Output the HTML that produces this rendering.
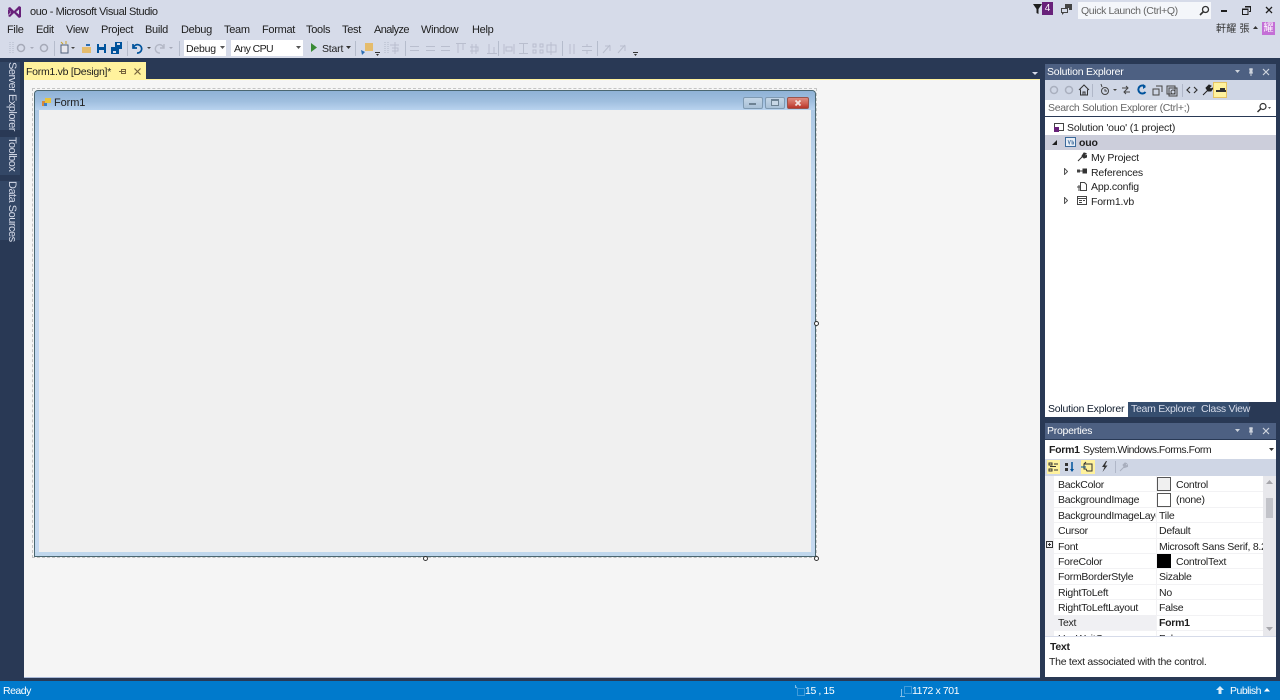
<!DOCTYPE html>
<html><head><meta charset="utf-8"><style>
html,body{margin:0;padding:0}
body{width:1280px;height:700px;overflow:hidden;position:relative;background:#d6dbe9;font-family:"Liberation Sans","Noto Sans CJK TC",sans-serif;font-size:11px;color:#1e1e1e}
div,span,svg{position:absolute}
.t{white-space:nowrap;line-height:14px;letter-spacing:-.27px;transform:translateY(1px)}
.m{top:22px;font-size:11px;color:#1e1e1e;line-height:15px;white-space:nowrap;letter-spacing:-.3px;transform:translateY(1px)}
.w{color:#fff}
.sep{width:1px;background:#b5bccc}
.row{left:1058px;font-size:10.5px;white-space:nowrap;line-height:14px;color:#1e1e1e;letter-spacing:-.27px;transform:translateY(1px)}
.val{left:1159px;font-size:10.5px;white-space:nowrap;line-height:14px;color:#1e1e1e;letter-spacing:-.27px;transform:translateY(1px)}
.line{left:1054px;width:209px;height:1px;background:#f2f2f4}
.tree{font-size:10.5px;white-space:nowrap;line-height:14px;color:#1e1e1e;letter-spacing:-.17px;transform:translateY(1px)}
.v{left:5px;writing-mode:vertical-rl;color:#d6dbe9;font-size:11px;line-height:14px;white-space:nowrap;letter-spacing:-.5px}
</style></head><body>

<svg style="left:7px;top:5px" width="15" height="14" viewBox="0 0 15 14"><path d="M1 4l3 3-3 3zM1 3l2-1 4 4 5-5 2 1v10l-2 1-5-5-4 4-2-1 3-3zM9 7l3 2.500V4.500z" fill="#68217a" fill-rule="evenodd"/></svg>
<div class="t" style="left:30px;top:4px;font-size:11px;letter-spacing:-.42px">ouo - Microsoft Visual Studio</div>

<div class="m" style="left:7px">File</div>
<div class="m" style="left:36px">Edit</div>
<div class="m" style="left:66px">View</div>
<div class="m" style="left:101px">Project</div>
<div class="m" style="left:145px">Build</div>
<div class="m" style="left:181px">Debug</div>
<div class="m" style="left:224px">Team</div>
<div class="m" style="left:262px">Format</div>
<div class="m" style="left:306px">Tools</div>
<div class="m" style="left:342px">Test</div>
<div class="m" style="left:374px;letter-spacing:-.6px">Analyze</div>
<div class="m" style="left:421px">Window</div>
<div class="m" style="left:472px">Help</div>

<!-- toolbar -->
<svg style="left:8px;top:40px" width="8" height="16"><path d="M2 2v12M5 2v12" stroke="#b3b9c9" stroke-dasharray="1 1"/></svg>
<svg style="left:16px;top:42px" width="36" height="12"><circle cx="5" cy="6" r="3.500" fill="none" stroke="#a6aab8" stroke-width="1.500"/><circle cx="28" cy="6" r="3.500" fill="none" stroke="#a6aab8" stroke-width="1.500"/><path d="M14 5h4l-2 2z" fill="#a6aab8"/></svg>
<div class="sep" style="left:54px;top:41px;height:15px"></div>
<svg style="left:58px;top:41px" width="66" height="14"><rect x="3" y="4" width="7" height="8" fill="#e8e8ee" stroke="#50607a"/><path d="M3 1l2 2M8 0v3" stroke="#c9a227"/><path d="M13 6h4l-2 2z" fill="#444"/><path d="M24 6h9v6h-9z" fill="#e5bc6c"/><path d="M28 3h4v2h-4z" fill="#2a6db3"/><path d="M39 3h9v9h-9z" fill="#00539c"/><path d="M41 3h5v3h-5zM41 9h5v3h-5z" fill="#d6dbe9"/><path d="M53 6h8v7h-8z" fill="#00539c"/><path d="M57 1h7v7h-7z" fill="#00539c"/><path d="M59 2h3v2h-3zM55 10h3v2h-3z" fill="#d6dbe9"/></svg>
<div class="sep" style="left:127px;top:41px;height:15px"></div>
<svg style="left:130px;top:41px" width="46" height="14"><path d="M3 3v4h4M3.500 6.500A4.200 4.200 0 1 1 7 12" fill="none" stroke="#00539c" stroke-width="1.700"/><path d="M17 6h4l-2 2z" fill="#444"/><path d="M34 3v4h-4M33.500 6.500A4.200 4.200 0 1 0 30 12" fill="none" stroke="#b3b8c6" stroke-width="1.400"/><path d="M39 6h4l-2 2z" fill="#a6aab8"/></svg>
<div class="sep" style="left:179px;top:41px;height:15px"></div>

<div style="left:184px;top:40px;width:42px;height:16px;background:#fff"></div>
<div class="t" style="left:186px;top:41px;font-size:10.5px;letter-spacing:-.2px">Debug</div>
<svg style="left:220px;top:46px" width="6" height="4"><path d="M0 0h5l-2.500 3z" fill="#555"/></svg>
<div style="left:231px;top:40px;width:72px;height:16px;background:#fff"></div>
<div class="t" style="left:234px;top:41px;font-size:10.5px;letter-spacing:-.6px">Any CPU</div>
<svg style="left:296px;top:46px" width="6" height="4"><path d="M0 0h5l-2.500 3z" fill="#555"/></svg>

<svg style="left:310px;top:42px" width="8" height="11"><path d="M1 1l6 4.500-6 4.500z" fill="#388a34"/></svg>
<div class="t" style="left:322px;top:41px;font-size:10.5px;letter-spacing:-.2px">Start</div>
<svg style="left:346px;top:46px" width="6" height="4"><path d="M0 0h5l-2.500 3z" fill="#333"/></svg>
<div class="sep" style="left:355px;top:41px;height:15px"></div>
<svg style="left:359px;top:41px" width="22" height="16"><path d="M6 2h8v8H6z" fill="#e5bc6c"/><path d="M2 9l4 2-3 3z" fill="#2a6db3"/><path d="M16 11h5v1h-5z" fill="#333"/><path d="M17 13h3l-1.500 2z" fill="#333"/></svg>
<svg style="left:383px;top:40px" width="8" height="16"><path d="M2 2v12M5 2v12" stroke="#b3b9c9" stroke-dasharray="1 1"/></svg>
<svg style="left:389px;top:41px" width="250" height="16">
<g fill="none" stroke="#b9bece">
<path d="M1 4h9M6 1v12M3 7h6v3H3"/>
<path d="M21 5.500h9M21 9.500h9M37 5.500h9M37 9.500h9M52 5.500h9M52 9.500h9"/>
<path d="M67 2.500h10M69 3v9M74 3v6M83 3v10M87 3v10M81 6h8v4h-8M98 12.500h10M100 3v9M105 6v6"/>
<path d="M115 3v10M125 3v10M117 6h6v4h-6zM130 2.500h9M130 12.500h9M134.500 3v9M144 3h3v3h-3zM151 3h3v3h-3zM144 9h3v3h-3zM151 9h3v3h-3zM158 4h9v7h-9zM162 1v13"/>
<path d="M181 3v10M185 3v10M193 5.500h10M193 9.500h10M198 3v2M198 10v3"/>
<path d="M214 12l7-8M216 5h5v5M229 12l7-8M231 5h5v5"/>
</g>
<path d="M244 11h5v1h-5zM245 13h3l-1.500 2z" fill="#333"/>
</svg>
<div class="sep" style="left:405px;top:41px;height:15px"></div>
<div class="sep" style="left:498px;top:41px;height:15px"></div>
<div class="sep" style="left:562px;top:41px;height:15px"></div>
<div class="sep" style="left:597px;top:41px;height:15px"></div>

<!-- top right -->
<svg style="left:1033px;top:4px" width="9" height="10"><path d="M0 0h9L5.500 5v5L3.500 9V5z" fill="#1e1e1e"/></svg>
<div style="left:1042px;top:2px;width:11px;height:13px;background:#68217a;color:#fff;text-align:center;line-height:13px;font-size:10px">4</div>
<svg style="left:1061px;top:4px" width="11" height="11"><path d="M4 0h7v6H8v-2H4z" fill="#444"/><path d="M0 4h7v5H3l-2 2V9H0z" fill="#444"/><path d="M1 5h5v3H1z" fill="#d6dbe9"/></svg>
<div style="left:1078px;top:2px;width:133px;height:17px;background:#f4f6fa"></div>
<div class="t" style="left:1081px;top:3px;color:#666;font-size:10.5px;letter-spacing:-.38px">Quick Launch (Ctrl+Q)</div>
<svg style="left:1199px;top:5px" width="11" height="11"><circle cx="6.500" cy="4.500" r="3" fill="none" stroke="#333" stroke-width="1.300"/><path d="M4.500 6.500L1 10" stroke="#333" stroke-width="1.600"/></svg>
<div style="left:1221px;top:10px;width:6px;height:2px;background:#1e1e1e"></div>
<svg style="left:1242px;top:6px" width="9" height="9"><path d="M3 .5h5.500v5H7M.5 3h5.500v5.500H.5z" fill="none" stroke="#1e1e1e"/><path d="M3 1h5M1 3.500h5" stroke="#1e1e1e"/></svg>
<svg style="left:1265px;top:6px" width="8" height="8"><path d="M1 1l6 6M7 1L1 7" stroke="#1e1e1e" stroke-width="1.300"/></svg>
<div class="t" style="left:1216px;top:22px;font-size:10px;color:#333;letter-spacing:.3px">軒耀 張</div>
<svg style="left:1253px;top:26px" width="5" height="3"><path d="M0 3h5L2.500 0z" fill="#333"/></svg>
<div style="left:1262px;top:22px;width:13px;height:13px;background:#c46fd6;color:#fff;font-size:10px;line-height:13px;text-align:center;overflow:hidden">耀</div>

<!-- dark band -->
<div style="left:0;top:58px;width:1280px;height:623px;background:#293955"></div>
<!-- left strip -->
<div style="left:0;top:62px;width:20px;height:68px;background:#334766"></div>
<div style="left:0;top:137px;width:20px;height:38px;background:#334766"></div>
<div style="left:0;top:181px;width:20px;height:59px;background:#334766"></div>
<div class="v" style="top:62px">Server Explorer</div>
<div class="v" style="top:137px">Toolbox</div>
<div class="v" style="top:181px">Data Sources</div>

<!-- document tab -->
<div style="left:24px;top:62px;width:122px;height:18px;background:#fff29d"></div>
<div class="t" style="left:26px;top:64px;font-size:10.5px">Form1.vb [Design]*</div>
<svg style="left:119px;top:68px" width="7" height="7"><path d="M0 3.500h2M2.500 1v5M2.500 1.500h4v4h-4M2.500 3.500h4" fill="none" stroke="#75633d"/></svg>
<svg style="left:134px;top:68px" width="7" height="7"><path d="M.5.500l6 6M6.500.500l-6 6" stroke="#75633d" stroke-width="1.200"/></svg>
<svg style="left:1032px;top:72px" width="6" height="4"><path d="M0 0h6L3 3z" fill="#d6dbe9"/></svg>

<!-- doc area -->
<div style="left:24px;top:79px;width:1016px;height:1px;background:#fff29d"></div>
<div style="left:24px;top:80px;width:1016px;height:597px;background:#f5f5f5"></div>
<div style="left:24px;top:677px;width:1016px;height:1px;background:#a9b8d6"></div>

<!-- form -->
<div style="left:33px;top:89px;width:783px;height:468px;outline:1px dashed #c4c4c4"></div>
<div style="left:34px;top:90px;width:782px;height:467px;border-radius:4px 4px 0 0;background:linear-gradient(#a4c2e0,#c3d8ef 18%,#c5d9f0);box-shadow:inset 0 0 0 1px #4a6670"></div>
<div style="left:35px;top:91px;width:780px;height:19px;background:linear-gradient(#8fb2d6,#a0bfdf 55%,#b9d3ef);border-radius:3px 3px 0 0"></div>
<div style="left:39px;top:110px;width:772px;height:442px;background:#f0f0f0"></div>
<div style="left:35px;top:552px;width:780px;height:4px;background:#c0d7ec"></div>
<svg style="left:42px;top:98px" width="9" height="9"><path d="M0 3h4v5H0z" fill="#d5883a"/><path d="M3 0h6v5H3z" fill="#e8c43e"/><path d="M2 5h3v3H2z" fill="#3c7fc7"/></svg>
<div class="t" style="left:54px;top:95px;font-size:11px;color:#222;letter-spacing:-.1px">Form1</div>
<div style="left:743px;top:97px;width:18px;height:10px;border:1px solid #7f9ab2;border-radius:2px;background:linear-gradient(#c4d6e7,#a9c1d7)"></div>
<div style="left:749px;top:103px;width:7px;height:2px;background:#6d8293"></div>
<div style="left:765px;top:97px;width:18px;height:10px;border:1px solid #7f9ab2;border-radius:2px;background:linear-gradient(#c4d6e7,#a9c1d7)"></div>
<div style="left:771px;top:99px;width:6px;height:4px;border:1px solid #6d8293;border-top-width:2px;background:#c7d7e6"></div>
<div style="left:787px;top:97px;width:20px;height:10px;border:1px solid #9a544c;border-radius:2px;background:linear-gradient(#dd8c80,#cf5f52 55%,#b8342a)"></div>
<svg style="left:794px;top:99px" width="8" height="8"><path d="M1.500 1.500l5 5M6.500 1.500l-5 5" stroke="#f3e3e0" stroke-width="1.800"/></svg>
<div style="left:814px;top:321px;width:3px;height:3px;background:#fff;border:1px solid #333;border-radius:50%"></div>
<div style="left:423px;top:556px;width:3px;height:3px;background:#fff;border:1px solid #333;border-radius:50%"></div>
<div style="left:814px;top:556px;width:3px;height:3px;background:#fff;border:1px solid #333;border-radius:50%"></div>

<!-- solution explorer -->
<div style="left:1045px;top:64px;width:231px;height:16px;background:#4d6082"></div>
<div class="t" style="left:1047px;top:64px;color:#fff;font-size:10.5px;letter-spacing:-.2px">Solution Explorer</div>
<svg style="left:1235px;top:68px" width="36" height="9"><path d="M0 2h5L2.500 5z" fill="#ced4dd"/><path d="M16 0v5M14 1h4M15 1v3h2v-3M14 5h4M16 5v3" fill="none" stroke="#ced4dd"/><path d="M28 1l6 6M34 1l-6 6" stroke="#ced4dd" stroke-width="1.200"/></svg>
<div style="left:1045px;top:80px;width:231px;height:20px;background:#cfd6e5"></div>
<svg style="left:1049px;top:83px" width="186" height="14">
<circle cx="5" cy="7" r="3.500" fill="none" stroke="#a9afbe" stroke-width="1.500"/><circle cx="20" cy="7" r="3.500" fill="none" stroke="#a9afbe" stroke-width="1.500"/>
<path d="M30 7l5-5 5 5M31.500 6.500V12h7V6.500M34 12V9h2v3" fill="none" stroke="#333"/>
<path d="M43.500 1v13" stroke="#b0b7c8"/>
<circle cx="56" cy="8" r="3.500" fill="none" stroke="#444"/><path d="M52 1l1 3M56 6v2h2" fill="none" stroke="#444"/><path d="M64 6h4l-2 2z" fill="#444"/>
<path d="M73 5h6M77 3l2 2-2 2M81 9h-6M77 7l-2 2 2 2" fill="none" stroke="#444"/>
<path d="M96 3.500A4 4 0 1 0 96.500 9" fill="none" stroke="#00539c" stroke-width="2"/><path d="M94 1l3 3-3 2z" fill="#00539c"/>
<path d="M104 6h6v6h-6zM107 3h6v6" fill="none" stroke="#444"/>
<path d="M118 3h8v8h-8zM120 5h8v8h-8z" fill="none" stroke="#444"/><circle cx="124" cy="9" r="2" fill="none" stroke="#444"/>
<path d="M133.500 1v13" stroke="#b0b7c8"/>
<path d="M141 4l-3 3 3 3M145 4l3 3-3 3" fill="none" stroke="#333" stroke-width="1.200"/>
<path d="M154 12l5-5M157 5l3-3 2 1-2 2 2 1 2-1-2 3-3 0z" fill="#222" stroke="#222"/>
</svg>
<div style="left:1213px;top:82px;width:14px;height:16px;background:#fff29d;border:1px solid #e5c365;box-sizing:border-box"></div>
<div style="left:1216px;top:90px;width:10px;height:2px;background:#333"></div>
<div style="left:1220px;top:88px;width:5px;height:2px;background:#333"></div>
<div style="left:1045px;top:100px;width:231px;height:16px;background:#fff"></div>
<div class="t" style="left:1048px;top:100px;color:#666;font-size:10.5px;letter-spacing:-.3px">Search Solution Explorer (Ctrl+;)</div>
<svg style="left:1256px;top:102px" width="16" height="11"><circle cx="7" cy="4.500" r="3" fill="none" stroke="#333" stroke-width="1.200"/><path d="M5 6.500L1.500 10" stroke="#333" stroke-width="1.500"/><path d="M12 5h3l-1.500 2z" fill="#555"/></svg>
<div style="left:1045px;top:117px;width:231px;height:285px;background:#fff"></div>
<div style="left:1045px;top:135px;width:231px;height:15px;background:#cccedb"></div>
<svg style="left:1053px;top:122px" width="11" height="11"><path d="M1.500 1.500h9v7h-9z" fill="none" stroke="#444"/><path d="M1 5h5v5H1z" fill="#68217a"/></svg>
<div class="tree" style="left:1067px;top:120px">Solution 'ouo' (1 project)</div>
<svg style="left:1052px;top:140px" width="5" height="5"><path d="M5 0v5H0z" fill="#1e1e1e"/></svg>
<svg style="left:1065px;top:137px" width="11" height="10"><rect x=".5" y=".5" width="10" height="9" fill="#e8eef6" stroke="#3b6a9b"/><path d="M3 3l1.200 4L5.500 3M7 3v4h1.500V5H7" fill="none" stroke="#3b6a9b" stroke-width=".7"/></svg>
<div class="tree" style="left:1079px;top:135px;font-weight:bold">ouo</div>
<svg style="left:1077px;top:152px" width="10" height="10"><path d="M1 9l4.500-4.500M5 4l2-3 2 .500-1.500 1.500 1.500 1 1-1 0 2-3 1z" fill="#333" stroke="#333"/></svg>
<div class="tree" style="left:1091px;top:150px">My Project</div>
<svg style="left:1064px;top:168px" width="4" height="7"><path d="M.5.500l3 3-3 3z" fill="none" stroke="#555"/></svg>
<svg style="left:1077px;top:168px" width="10" height="6"><rect width="3" height="3" y="1.500" fill="#444"/><rect x="5.500" y="0.500" width="4.500" height="5" fill="#333"/><path d="M3 3h3" stroke="#444"/></svg>
<div class="tree" style="left:1091px;top:165px">References</div>
<svg style="left:1077px;top:181px" width="10" height="11"><path d="M3.500 1.500h4l2 2v6h-6z" fill="none" stroke="#444"/><path d="M0 6h3M2 4v6" stroke="#444"/></svg>
<div class="tree" style="left:1091px;top:179px">App.config</div>
<svg style="left:1064px;top:197px" width="4" height="7"><path d="M.5.500l3 3-3 3z" fill="none" stroke="#555"/></svg>
<svg style="left:1077px;top:196px" width="10" height="9"><path d="M.5.500h9v8h-9zM1 2.500h8M2 4.500h3M2 6.500h3M6 4.500h2" fill="none" stroke="#444"/></svg>
<div class="tree" style="left:1091px;top:194px">Form1.vb</div>

<!-- tabs -->
<div style="left:1045px;top:402px;width:83px;height:15px;background:#fff"></div>
<div class="t" style="left:1048px;top:401px;font-size:10.5px;color:#0e1a2b;letter-spacing:-.22px">Solution Explorer</div>
<div style="left:1128px;top:402px;width:121px;height:15px;background:#364e6f"></div>
<div class="t" style="left:1131px;top:401px;font-size:10.5px;color:#d6dbe9">Team Explorer</div>
<div class="t" style="left:1201px;top:401px;font-size:10.5px;color:#d6dbe9">Class View</div>

<!-- properties -->
<div style="left:1045px;top:423px;width:231px;height:16px;background:#4d6082"></div>
<div class="t" style="left:1047px;top:423px;color:#fff;font-size:10.5px">Properties</div>
<svg style="left:1235px;top:427px" width="36" height="9"><path d="M0 2h5L2.500 5z" fill="#ced4dd"/><path d="M16 0v5M14 1h4M15 1v3h2v-3M14 5h4M16 5v3" fill="none" stroke="#ced4dd"/><path d="M28 1l6 6M34 1l-6 6" stroke="#ced4dd" stroke-width="1.200"/></svg>
<div style="left:1045px;top:440px;width:231px;height:19px;background:#fff"></div>
<div class="t" style="left:1049px;top:442px;font-size:10.5px;font-weight:bold">Form1</div>
<div class="t" style="left:1083px;top:442px;font-size:10.5px;letter-spacing:-.5px">System.Windows.Forms.Form</div>
<svg style="left:1269px;top:448px" width="5" height="3"><path d="M0 0h5L2.500 3z" fill="#333"/></svg>
<div style="left:1045px;top:459px;width:231px;height:17px;background:#cfd6e5"></div>
<div style="left:1047px;top:460px;width:13px;height:14px;background:#fff29d"></div>
<div style="left:1081px;top:460px;width:14px;height:14px;background:#fff29d"></div>
<svg style="left:1048px;top:461px" width="84" height="12">
<path d="M1 2h3v2H1zM1 8h3v2H1z" fill="none" stroke="#333"/><path d="M6 3h4M6 9h4M2 5.500h6" stroke="#333"/>
<path d="M17 2h3v3h-3zM17 7h3v3h-3z" fill="#333"/><path d="M24 1v9" stroke="#00539c" stroke-width="1.500"/><path d="M22 8h4l-2 3z" fill="#00539c"/>
<path d="M36 3h8v7h-5l-1-2h-2zM36 3l2-2" fill="none" stroke="#333"/><path d="M33 6h5" stroke="#00539c"/>
<path d="M58 0l-4 6h2.500l-2 5 5-6.500h-2.500l2-4.500z" fill="#333"/>
<path d="M67.500 0v12" stroke="#b0b7c8"/>
<path d="M72 10l4-4M75 4l2-2 1.500.500-1.500 1.500 1.500 1 1-1 0 1.500-3 1z" fill="#a9afbe" stroke="#a9afbe"/>
</svg>

<div style="left:1045px;top:476px;width:231px;height:160px;background:#fff"></div>
<div style="left:1045px;top:476px;width:9px;height:160px;background:#f0f0f3"></div>
<div style="left:1263px;top:476px;width:13px;height:160px;background:#e8e8ec"></div>
<div style="left:1266px;top:498px;width:7px;height:20px;background:#c2c3c9"></div>
<svg style="left:1266px;top:480px" width="7" height="5"><path d="M0 4h7L3.500 0z" fill="#a6a6ab"/></svg>
<svg style="left:1266px;top:627px" width="7" height="5"><path d="M0 0h7L3.500 4z" fill="#a6a6ab"/></svg>
<div style="left:1156px;top:476px;width:1px;height:160px;background:#f2f2f4"></div>
<div class="line" style="top:491px"></div><div class="line" style="top:507px"></div><div class="line" style="top:522px"></div><div class="line" style="top:538px"></div><div class="line" style="top:553px"></div><div class="line" style="top:568px"></div><div class="line" style="top:584px"></div><div class="line" style="top:599px"></div><div class="line" style="top:615px"></div><div class="line" style="top:630px"></div>
<div style="left:1054px;top:615px;width:102px;height:15px;background:#f0f0f3"></div>

<div class="row" style="top:477px">BackColor</div>
<div style="left:1157px;top:477px;width:12px;height:12px;background:#f0f0f0;border:1px solid #555"></div>
<div class="val" style="left:1176px;top:477px">Control</div>
<div class="row" style="top:492px">BackgroundImage</div>
<div style="left:1157px;top:493px;width:12px;height:12px;background:#fff;border:1px solid #555"></div>
<div class="val" style="left:1176px;top:492px">(none)</div>
<div class="row" style="top:508px;width:98px;overflow:hidden">BackgroundImageLayout</div>
<div class="val" style="top:508px">Tile</div>
<div class="row" style="top:523px">Cursor</div>
<div class="val" style="top:523px">Default</div>
<svg style="left:1046px;top:541px" width="7" height="7"><path d="M.5.500h6v6h-6zM2 3.500h3M3.500 2v3" fill="none" stroke="#333"/></svg>
<div class="row" style="top:539px">Font</div>
<div class="val" style="top:539px;width:104px;overflow:hidden">Microsoft Sans Serif, 8.25pt</div>
<div class="row" style="top:554px">ForeColor</div>
<div style="left:1157px;top:554px;width:14px;height:14px;background:#000"></div>
<div class="val" style="left:1176px;top:554px">ControlText</div>
<div class="row" style="top:569px">FormBorderStyle</div>
<div class="val" style="top:569px">Sizable</div>
<div class="row" style="top:585px">RightToLeft</div>
<div class="val" style="top:585px">No</div>
<div class="row" style="top:600px">RightToLeftLayout</div>
<div class="val" style="top:600px">False</div>
<div class="row" style="top:615px">Text</div>
<div class="val" style="top:615px;font-weight:bold">Form1</div>
<div style="left:1054px;top:631px;width:209px;height:5px;overflow:hidden">
  <div class="row" style="left:4px;top:0">UseWaitCursor</div>
  <div class="val" style="left:105px;top:0">False</div>
</div>

<div style="left:1045px;top:636px;width:231px;height:1px;background:#d6dbe9"></div>
<div style="left:1045px;top:637px;width:231px;height:40px;background:#fff"></div>
<div class="t" style="left:1050px;top:639px;font-weight:bold;font-size:10.5px">Text</div>
<div class="t" style="left:1049px;top:654px;font-size:10.5px">The text associated with the control.</div>

<!-- status -->
<div style="left:0;top:681px;width:1280px;height:19px;background:#007acc"></div>
<div class="t w" style="left:3px;top:683px;font-size:10.5px;letter-spacing:-.5px">Ready</div>
<svg style="left:795px;top:685px" width="10" height="11"><path d="M2.500 3.500h7v7h-7z" fill="none" stroke="#7fbce6" stroke-dasharray="1 1"/><path d="M.5 0v3M0 1l2 2" stroke="#7fbce6"/></svg>
<div class="t w" style="left:805px;top:683px;font-size:10.5px;letter-spacing:-.4px">15 , 15</div>
<svg style="left:900px;top:685px" width="12" height="12"><path d="M4.500 1.500h7v7h-7z" fill="none" stroke="#7fbce6" stroke-dasharray="1 1"/><path d="M1.500 4v7M0 11.500h5" stroke="#7fbce6"/></svg>
<div class="t w" style="left:912px;top:683px;font-size:10.5px;letter-spacing:-.4px">1172 x 701</div>
<svg style="left:1216px;top:686px" width="8" height="9"><path d="M4 0l4 4H5.500v4h-3V4H0z" fill="#d8ecf9"/></svg>
<div class="t w" style="left:1230px;top:683px;font-size:10.5px;letter-spacing:-.5px">Publish</div>
<svg style="left:1264px;top:688px" width="6" height="4"><path d="M0 3.500h6L3 0z" fill="#fff"/></svg>

</body></html>
